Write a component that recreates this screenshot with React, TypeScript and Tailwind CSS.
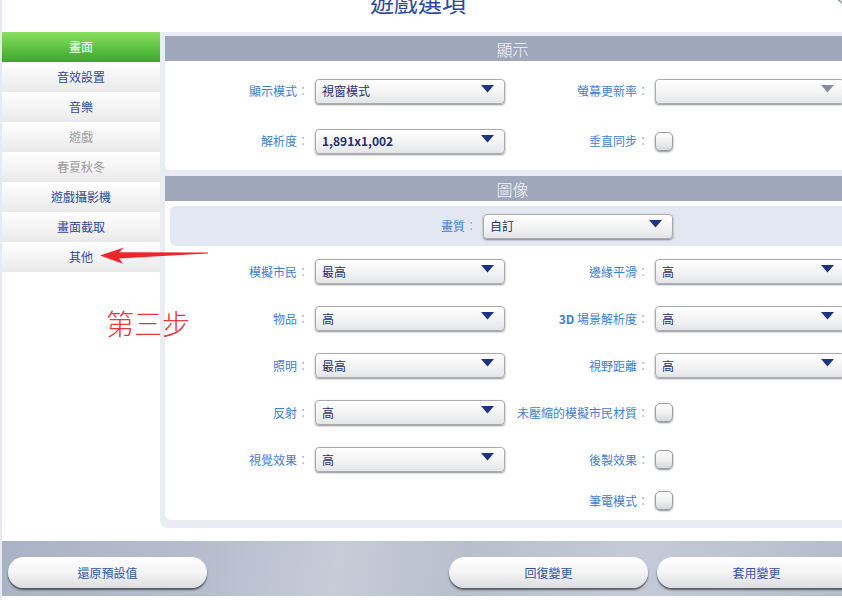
import React from 'react';

const font = { fontFamily: '"Noto Sans CJK TC", "Noto Sans CJK SC", "Liberation Sans", sans-serif' };

const sideItems = [
  { label: '畫面', state: 'active' },
  { label: '音效設置', state: 'normal' },
  { label: '音樂', state: 'normal' },
  { label: '遊戲', state: 'dim' },
  { label: '春夏秋冬', state: 'dim' },
  { label: '遊戲攝影機', state: 'normal' },
  { label: '畫面截取', state: 'normal' },
  { label: '其他', state: 'normal' },
];

function Arrow({ gray }: { gray?: boolean }) {
  return (
    <svg width="13" height="8" viewBox="0 0 13 8" className="shrink-0 mb-[5px]">
      <polygon points="0,0 13,0 6.5,7.5" fill={gray ? '#8a8d94' : '#1c3486'} />
    </svg>
  );
}

function Select({ value, bold, gray, width = 'w-[190px]' }: { value?: string; bold?: boolean; gray?: boolean; width?: string }) {
  return (
    <div
      className={`${width} h-[25px] shrink-0 flex items-center justify-between pl-[6px] pr-[10px] rounded-[4px] border border-[#a9abb0] bg-[linear-gradient(#ffffff,#f3f3f4_55%,#e4e5e8)] shadow-[0_1px_2px_rgba(0,0,0,0.45)]`}
    >
      <span className={`text-[12px] text-[#26306f] ${bold ? 'font-bold' : ''}`}>{value}</span>
      <Arrow gray={gray} />
    </div>
  );
}

function Check() {
  return (
    <div className="w-[18px] h-[19px] shrink-0 rounded-[5px] border border-[#9a9da3] bg-[linear-gradient(#ffffff,#f0f0f1_50%,#d9dade)] shadow-[0_1px_2px_rgba(0,0,0,0.45)]" />
  );
}

function Label({ children, w = 'w-[150px]' }: { children: React.ReactNode; w?: string }) {
  return (
    <div className={`${w} shrink-0 pr-[6px] text-right text-[12px] text-[#3f80d8] whitespace-nowrap`}>
      {children}
      <span className="text-[#8fb2e3]">：</span>
    </div>
  );
}

function Row({ h, left, right }: { h: string; left?: React.ReactNode; right?: React.ReactNode }) {
  return (
    <div className={`${h} flex items-center`}>
      {left ?? <div className="w-[340px] shrink-0" />}
      {right}
    </div>
  );
}

function Header({ title }: { title: string }) {
  return (
    <div className="h-[25px] bg-[#9ea8ba] flex items-center justify-center text-[16px] font-light text-[#f4f5f8]">
      {title}
    </div>
  );
}

export default function App() {
  return (
    <div className="relative w-[842px] h-[600px] overflow-hidden bg-white border-l-2 border-[#e7eaf0]" style={font}>
      <div className="h-[32px] flex justify-center overflow-hidden">
        <div className="text-[24px] leading-none text-[#2b49a3] mt-[-10px] ml-[-8px]">遊戲選項</div>
      </div>

      <div className="flex h-[496px]">
        <div className="w-[158px] shrink-0 flex flex-col">
          {sideItems.map((it) => (
            <div
              key={it.label}
              className={`h-[30px] flex items-center justify-center text-[12px] ${
                it.state === 'active'
                  ? 'bg-[linear-gradient(#88df60,#3ba82b)] text-white'
                  : it.state === 'dim'
                  ? 'bg-[linear-gradient(#ffffff,#e9e9ea)] text-[#9a9a9a]'
                  : 'bg-[linear-gradient(#ffffff,#e9e9ea)] text-[#2c4a9e]'
              }`}
            >
              {it.label}
            </div>
          ))}
        </div>

        <div className="w-[700px] shrink-0 bg-[#e9ecf2] pl-[5px] pt-[4px] pb-[8px] rounded-bl-[8px] flex flex-col">
          <Header title="顯示" />
          <div className="h-[109px] bg-white rounded-b-[6px] pt-[5px]">
            <Row
              h="h-[50px]"
              left={
                <>
                  <Label>顯示模式</Label>
                  <Select value="視窗模式" />
                </>
              }
              right={
                <>
                  <Label>螢幕更新率</Label>
                  <Select gray />
                </>
              }
            />
            <Row
              h="h-[50px]"
              left={
                <>
                  <Label>解析度</Label>
                  <Select value="1,891x1,002" bold />
                </>
              }
              right={
                <>
                  <Label>垂直同步</Label>
                  <Check />
                </>
              }
            />
          </div>

          <div className="h-[6px]" />
          <Header title="圖像" />
          <div className="flex-1 bg-white rounded-b-[6px] pt-[5px]">
            <div className="mx-[5px] h-[40px] rounded-[6px] bg-[#e3e7f1] flex items-center">
              <Label w="w-[313px]">畫質</Label>
              <Select value="自訂" />
            </div>
            <div className="h-[2px]" />
            <Row
              h="h-[47px]"
              left={
                <>
                  <Label>模擬市民</Label>
                  <Select value="最高" />
                </>
              }
              right={
                <>
                  <Label>邊緣平滑</Label>
                  <Select value="高" />
                </>
              }
            />
            <Row
              h="h-[47px]"
              left={
                <>
                  <Label>物品</Label>
                  <Select value="高" />
                </>
              }
              right={
                <>
                  <Label>
                    <span className="font-bold">3D</span> 場景解析度
                  </Label>
                  <Select value="高" />
                </>
              }
            />
            <Row
              h="h-[47px]"
              left={
                <>
                  <Label>照明</Label>
                  <Select value="最高" />
                </>
              }
              right={
                <>
                  <Label>視野距離</Label>
                  <Select value="高" />
                </>
              }
            />
            <Row
              h="h-[47px]"
              left={
                <>
                  <Label>反射</Label>
                  <Select value="高" />
                </>
              }
              right={
                <>
                  <Label>未壓縮的模擬市民材質</Label>
                  <Check />
                </>
              }
            />
            <Row
              h="h-[47px]"
              left={
                <>
                  <Label>視覺效果</Label>
                  <Select value="高" />
                </>
              }
              right={
                <>
                  <Label>後製效果</Label>
                  <Check />
                </>
              }
            />
            <Row
              h="h-[35px]"
              right={
                <>
                  <Label>筆電模式</Label>
                  <Check />
                </>
              }
            />
          </div>
        </div>
      </div>

      <div className="h-[13px]" />

      <div className="h-[55px] flex pt-[16px] bg-[linear-gradient(100deg,#aab3c5_0%,#b6bece_25%,#c6ccd8_40%,#b7bfcd_55%,#c4cad7_75%,#b5bdcc_100%)]">
        <button className="ml-[6px] w-[199px] h-[31px] shrink-0 rounded-full bg-[linear-gradient(#ffffff,#f4f4f5_50%,#dcdde1)] shadow-[0_2px_2px_rgba(0,0,0,0.55)] text-[12px] text-[#3553a8]">
          還原預設值
        </button>
        <button className="ml-[242px] w-[199px] h-[31px] shrink-0 rounded-full bg-[linear-gradient(#ffffff,#f4f4f5_50%,#dcdde1)] shadow-[0_2px_2px_rgba(0,0,0,0.55)] text-[12px] text-[#3553a8]">
          回復變更
        </button>
        <button className="ml-[9px] w-[199px] h-[31px] shrink-0 rounded-full bg-[linear-gradient(#ffffff,#f4f4f5_50%,#dcdde1)] shadow-[0_2px_2px_rgba(0,0,0,0.55)] text-[12px] text-[#3553a8]">
          套用變更
        </button>
      </div>

      {/* annotation overlay */}
      <svg className="absolute left-0 top-0 pointer-events-none" width="842" height="600">
        <path d="M98 255.5 L122 247.5 L117 252.2 L206 252.4 L206 253.4 L117 258.4 L121 263.8 Z" fill="#e8282d" />
        <path d="M836 0 Q841 2 842 8" stroke="#9aa0aa" strokeWidth="1.5" fill="none" />
      </svg>
      <div className="absolute left-[104px] top-[309px] text-[28px] leading-none font-light text-[#e8363b] pointer-events-none">
        第三步
      </div>
    </div>
  );
}
